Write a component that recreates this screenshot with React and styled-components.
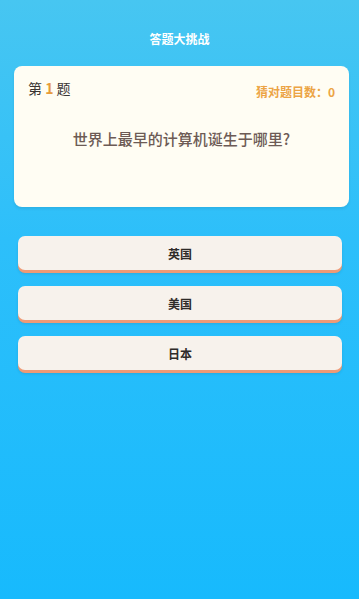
import React from "react";
import styled, { createGlobalStyle } from "styled-components";

const GlobalStyle = createGlobalStyle`
  html, body {
    margin: 0;
    padding: 0;
  }
  body {
    font-family: "Noto Sans CJK SC", "Noto Sans", sans-serif;
  }
`;

const options = ["英国", "美国", "日本"];

const App = () => {
  return (
    <>
      <GlobalStyle />
      <Page>
        <Header>答题大挑战</Header>
        <Card>
          <CardTop>
            <QuestionNo>
              第 <Accent>1</Accent> 题
            </QuestionNo>
            <Score>猜对题目数：0</Score>
          </CardTop>
          <Question>世界上最早的计算机诞生于哪里?</Question>
        </Card>
        <Options>
          {options.map((opt) => (
            <Option key={opt}>{opt}</Option>
          ))}
        </Options>
      </Page>
    </>
  );
};

const Page = styled.div`
  min-height: 100vh;
  box-sizing: border-box;
  background: linear-gradient(180deg, #47c6f1 0%, #2dbffa 40%, #17bafd 100%);
  display: flex;
  flex-direction: column;
`;

const Header = styled.div`
  height: 66px;
  display: flex;
  align-items: center;
  justify-content: center;
  padding-top: 10px;
  box-sizing: border-box;
  color: #ffffff;
  font-size: 12px;
  font-weight: bold;
`;

const Card = styled.div`
  margin: 0 10px 0 14px;
  height: 141px;
  box-sizing: border-box;
  background: #fffdf3;
  border-radius: 8px;
  padding: 12px 14px 0 14px;
  box-shadow: 0 2px 3px rgba(0, 0, 0, 0.08);
`;

const CardTop = styled.div`
  display: flex;
  justify-content: space-between;
  align-items: flex-start;
`;

const QuestionNo = styled.div`
  font-size: 14px;
  color: #3a3533;
  line-height: 20px;
`;

const Accent = styled.span`
  color: #e79b3a;
  font-weight: bold;
`;

const Score = styled.div`
  font-size: 12px;
  color: #eca444;
  font-weight: bold;
  line-height: 20px;
  margin-top: 4px;
`;

const Question = styled.div`
  margin-top: 25px;
  text-align: center;
  font-size: 15px;
  color: #6d5b55;
  font-weight: 500;
  line-height: 24px;
`;

const Options = styled.div`
  margin: 29px 17px 0 18px;
  display: flex;
  flex-direction: column;
  gap: 16px;
`;

const Option = styled.div`
  height: 34px;
  border-radius: 7px;
  background: #f7f2ec;
  box-shadow: 0 3px 0 #ee9a76, 0 4px 3px rgba(0, 0, 0, 0.1);
  display: flex;
  align-items: center;
  justify-content: center;
  font-size: 12px;
  font-weight: bold;
  color: #2f2b29;
`;

export default App;
